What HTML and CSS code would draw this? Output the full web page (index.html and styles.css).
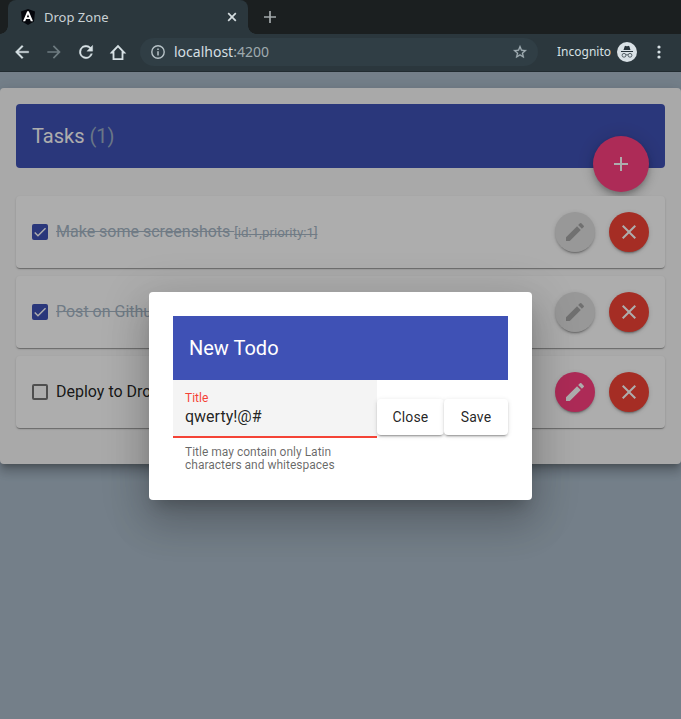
FILE: index.html
```html
<!DOCTYPE html>
<html lang="en">
<head>
<meta charset="utf-8">
<title>Drop Zone</title>
<link rel="stylesheet" href="styles.css">
</head>
<body>
<header class="browser">
  <div class="tabs">
    <div class="tab">
      <svg class="favicon" width="16" height="16" viewBox="0 0 16 16"><path fill="#05070d" d="M8 0l7 2.500-1 10L8 16l-6-3.500-1-10z"/><path fill="#fff" fill-rule="evenodd" d="M7.200 2.200L3 12.200H5.200l.9-2.200h3.800l.9 2.200H13L8.800 2.200zM8 5.200l1.200 3H6.800z"/></svg>
      <span class="tab-title">Drop Zone</span>
      <svg class="tab-close" width="10" height="10" viewBox="0 0 10 10"><path d="M1.200 1.200l7.600 7.600M8.800 1.200L1.200 8.800" stroke="#d5dde0" stroke-width="1.700"/></svg>
    </div>
    <svg class="new-tab" width="12" height="12" viewBox="0 0 12 12"><path d="M6 0v12M0 6h12" stroke="#a3a9ab" stroke-width="1.700"/></svg>
  </div>
  <div class="navbar">
    <svg class="nav" viewBox="0 0 24 24" fill="#d6e0e4" stroke="#d6e0e4" stroke-width=".4"><path d="M20 11H7.830l5.590-5.590L12 4l-8 8 8 8 1.410-1.410L7.830 13H20z"/></svg>
    <svg class="nav" viewBox="0 0 24 24" fill="#6e7b80"><path d="M4 11h12.170l-5.590-5.590L12 4l8 8-8 8-1.410-1.410L16.170 13H4z"/></svg>
    <svg class="nav" viewBox="0 0 24 24" fill="#d6e0e4" stroke="#d6e0e4" stroke-width=".4"><path d="M17.650 6.350A8 8 0 1 0 19.730 14h-2.080A6 6 0 1 1 12 6c1.660 0 3.140.690 4.220 1.780L13 11h7V4z"/></svg>
    <svg class="nav" viewBox="0 0 24 24" fill="none" stroke="#d6e0e4" stroke-width="2.200"><path d="M4.600 12.600L12 4.800l7.400 7.800h-2V20.500H6.600V12.600z"/></svg>
    <div class="address">
      <svg width="14" height="14" viewBox="0 0 14 14"><circle cx="7" cy="7" r="6.200" fill="none" stroke="#b8c3c8" stroke-width="1.400"/><path d="M7 6.200v4.300M7 3.500v1.500" stroke="#b8c3c8" stroke-width="1.500"/></svg>
      <span class="url">localhost<span class="port">:4200</span></span>
      <svg class="star" viewBox="0 0 24 24" fill="#a5b1b7" stroke="#a5b1b7" stroke-width=".4"><path d="M22 9.240l-7.190-.62L12 2 9.190 8.630 2 9.240l5.460 4.730L5.820 21 12 17.270 18.180 21l-1.630-7.030L22 9.240zM12 15.400l-3.760 2.270 1-4.280-3.320-2.880 4.380-.38L12 6.100l1.710 4.040 4.380.380-3.320 2.880 1 4.280L12 15.400z"/></svg>
    </div>
    <span class="incognito">Incognito</span>
    <svg class="spy" width="20" height="20" viewBox="0 0 20 20"><circle cx="10" cy="10" r="10" fill="#d9e1e6"/><path fill="#27333a" d="M7.700 4.300Q8 3.700 8.600 3.900L10 4.300l1.400-.4q.6-.2.900.4L13.500 8H6.500zM4 9h12v1H4z"/><g fill="none" stroke="#4a565c" stroke-width=".9"><circle cx="7" cy="13.300" r="1.900"/><circle cx="13" cy="13.300" r="1.900"/><path d="M8.900 13q1.100-.7 2.200 0"/></g></svg>
    <svg class="menu" width="4" height="14" viewBox="0 0 4 14" fill="#d6e0e4"><circle cx="2" cy="2" r="1.600"/><circle cx="2" cy="7" r="1.600"/><circle cx="2" cy="12" r="1.600"/></svg>
  </div>
</header>
<div class="page">
  <main class="panel">
    <div class="toolbar">
      <h1>Tasks <span class="count">(1)</span></h1>
      <button class="round add" aria-label="Add"><svg viewBox="0 0 24 24"><path d="M19 13h-6v6h-2v-6H5v-2h6V5h2v6h6z"/></svg></button>
    </div>
    <ul class="list">
      <li class="task done">
        <span class="box checked"><svg viewBox="0 0 24 24"><path d="M4.100 12.700L9 17.600 20.300 6.300" fill="none" stroke="#fff" stroke-width="2.130"/></svg></span>
        <span class="label">Make some screenshots <small>[id:1,priority:1]</small></span>
        <button class="round edit off" aria-label="Edit"><svg viewBox="0 0 24 24"><path d="M3 17.250V21h3.750L17.810 9.940l-3.750-3.750zM20.710 7.040a1 1 0 0 0 0-1.410l-2.340-2.340a1 1 0 0 0-1.410 0l-1.830 1.830 3.750 3.750z"/></svg></button>
        <button class="round del" aria-label="Delete"><svg viewBox="0 0 24 24"><path d="M19 6.410L17.590 5 12 10.590 6.410 5 5 6.410 10.590 12 5 17.590 6.410 19 12 13.410 17.590 19 19 17.590 13.410 12z"/></svg></button>
      </li>
      <li class="task done">
        <span class="box checked"><svg viewBox="0 0 24 24"><path d="M4.100 12.700L9 17.600 20.300 6.300" fill="none" stroke="#fff" stroke-width="2.130"/></svg></span>
        <span class="label">Post on Github</span>
        <button class="round edit off" aria-label="Edit"><svg viewBox="0 0 24 24"><path d="M3 17.250V21h3.750L17.810 9.940l-3.750-3.750zM20.710 7.040a1 1 0 0 0 0-1.410l-2.340-2.340a1 1 0 0 0-1.410 0l-1.830 1.830 3.750 3.750z"/></svg></button>
        <button class="round del" aria-label="Delete"><svg viewBox="0 0 24 24"><path d="M19 6.410L17.590 5 12 10.590 6.410 5 5 6.410 10.590 12 5 17.590 6.410 19 12 13.410 17.590 19 19 17.590 13.410 12z"/></svg></button>
      </li>
      <li class="task">
        <span class="box"></span>
        <span class="label">Deploy to Drop</span>
        <button class="round edit" aria-label="Edit"><svg viewBox="0 0 24 24"><path d="M3 17.250V21h3.750L17.810 9.940l-3.750-3.750zM20.710 7.040a1 1 0 0 0 0-1.410l-2.340-2.340a1 1 0 0 0-1.410 0l-1.830 1.830 3.750 3.750z"/></svg></button>
        <button class="round del" aria-label="Delete"><svg viewBox="0 0 24 24"><path d="M19 6.410L17.590 5 12 10.590 6.410 5 5 6.410 10.590 12 5 17.590 6.410 19 12 13.410 17.590 19 19 17.590 13.410 12z"/></svg></button>
      </li>
    </ul>
  </main>
  <div class="backdrop">
    <section class="dialog">
      <h2>New Todo</h2>
      <form class="form">
        <div class="field">
          <div class="control"><label>Title</label><div class="value">qwerty!@#</div></div>
          <p class="hint">Title may contain only Latin characters and whitespaces</p>
        </div>
        <button type="button" class="btn close">Close</button>
        <button type="button" class="btn save">Save</button>
      </form>
    </section>
  </div>
</div>
</body>
</html>
```
FILE: styles.css
```css
* { box-sizing: border-box; }
html, body { height: 100%; }
body { margin: 0; display: flex; flex-direction: column; font-family: Roboto, sans-serif; overflow: hidden; }
svg { display: block; flex: none; }
button { font: inherit; border: 0; padding: 0; }

/* Browser chrome */
.browser { flex: none; height: 72px; background: #2b373d; font-family: "Noto Sans", sans-serif; border-bottom: 1px solid #222c31; }
.tabs { display: flex; align-items: center; height: 34px; padding-left: 8px; background: #1b1f20; }
.tab { position: relative; display: flex; align-items: center; width: 240px; height: 34px; padding: 0 11px 0 12px; background: #2b373d; border-radius: 8px 8px 0 0; }
.tab::before, .tab::after { content: ""; position: absolute; bottom: 0; width: 8px; height: 8px; }
.tab::before { left: -8px; background: radial-gradient(circle at 0 0, transparent 7.500px, #2b373d 8px); }
.tab::after { right: -8px; background: radial-gradient(circle at 100% 0, transparent 7.500px, #2b373d 8px); }
.tab-title { flex: 1; margin-left: 8px; font-size: 13px; color: #c9d1d5; }
.new-tab { margin-left: 16px; }
.navbar { display: flex; align-items: center; height: 36px; padding-left: 12px; }
.nav { width: 20px; height: 20px; margin-right: 12px; }
.address { display: flex; align-items: center; width: 398px; height: 28px; padding: 0 10px 0 11px; border-radius: 14px; background: #303e45; }
.url { flex: 1; margin: -1px 0 0 9px; font-size: 14px; color: #d5dfe3; }
.port { color: #9faaaf; }
.star { width: 16px; height: 16px; }
.incognito { width: 52px; margin: -1px 0 0 19px; font-size: 12px; white-space: nowrap; color: #d6e0e4; }
.spy { margin-left: 8px; }
.menu { margin-left: 20px; }

/* Tasks */
.page { position: relative; flex: 1; padding-top: 16px; background: #abbccb; }
.panel { height: 376px; padding: 16px; background: #fafafa; border-radius: 4px; box-shadow: 0 5px 5px -3px rgba(0,0,0,.2), 0 8px 10px 1px rgba(0,0,0,.14), 0 3px 14px 2px rgba(0,0,0,.12); }
.toolbar { position: relative; display: flex; align-items: center; height: 64px; padding: 0 16px; border-radius: 4px; background: #3f51b5; color: #fff; }
h1, h2 { margin: 0; font-size: 20px; font-weight: 400; }
.count { color: #a5b9c9; opacity: .9; }
.round { display: flex; align-items: center; justify-content: center; flex: none; width: 40px; height: 40px; border-radius: 50%; background: #f44336; box-shadow: 0 3px 1px -2px rgba(0,0,0,.2), 0 2px 2px 0 rgba(0,0,0,.14), 0 1px 5px 0 rgba(0,0,0,.12); }
.round svg { width: 24px; height: 24px; fill: #fff; }
.add { position: absolute; right: 16px; bottom: -24px; width: 56px; height: 56px; background: #ff4081; box-shadow: 0 3px 5px -1px rgba(0,0,0,.2), 0 6px 10px 0 rgba(0,0,0,.14), 0 1px 18px 0 rgba(0,0,0,.12); }
.list { position: relative; display: flex; flex-direction: column; gap: 8px; margin: 28px 0 0; padding: 0; list-style: none; }
.task { display: flex; align-items: center; height: 72px; padding: 0 16px; border-radius: 4px; background: #fff; font-size: 16px; color: rgba(0,0,0,.87); box-shadow: 0 2px 1px -1px rgba(0,0,0,.2), 0 1px 1px 0 rgba(0,0,0,.14), 0 1px 3px 0 rgba(0,0,0,.12); }
.box { flex: none; width: 16px; height: 16px; border: 2px solid rgba(0,0,0,.54); border-radius: 2px; }
.box.checked { border: 0; background: #3f51b5; }
.label { flex: 1; margin: -2px 0 0 8px; white-space: nowrap; }
.label small { font-size: 13.333px; }
.done .label { color: #a5b5c5; text-decoration: line-through; }
.edit { margin-right: 14px; background: #ff4081; }
.edit.off { background: #e0e0e0; }
.edit.off svg { fill: #a6a6a6; }

/* Dialog */
.backdrop { position: absolute; inset: 0; display: flex; align-items: center; justify-content: center; background: rgba(0,0,0,.32); }
.dialog { width: 383px; height: 208px; padding: 24px; border-radius: 4px; background: #fff; color: rgba(0,0,0,.87); box-shadow: 0 11px 15px -7px rgba(0,0,0,.2), 0 24px 38px 3px rgba(0,0,0,.14), 0 9px 46px 8px rgba(0,0,0,.12); }
h2 { height: 64px; padding: 0 16px; line-height: 64px; background: #3f51b5; color: #fff; }
.form { display: flex; align-items: flex-start; }
.field { width: 204px; }
.control { height: 58px; padding: 10px 12px 0; background: #f4f4f4; border-bottom: 2px solid #f44336; }
label { display: block; font-size: 12px; line-height: 16px; color: #f44336; }
.value { font-size: 16px; line-height: 22px; }
.hint { margin: 8px 0 0; padding: 0 12px; font-size: 12px; line-height: 13px; color: rgba(0,0,0,.6); }
.btn { height: 36px; margin-top: 19px; border-radius: 4px; background: #fff; color: rgba(0,0,0,.87); font-size: 14px; font-weight: 400; letter-spacing: .15px; line-height: 36px; box-shadow: 0 3px 1px -2px rgba(0,0,0,.2), 0 2px 2px 0 rgba(0,0,0,.14), 0 1px 5px 0 rgba(0,0,0,.12); }
.close { width: 67px; }
.save { width: 64px; }
```
